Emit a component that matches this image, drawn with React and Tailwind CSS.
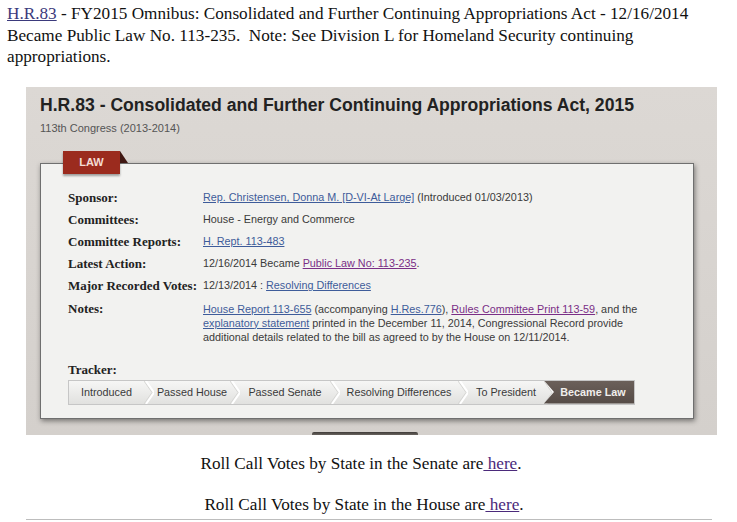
import React from 'react';

const serif = "font-['Liberation_Serif','Times_New_Roman',serif]";
const sans = "font-['Liberation_Sans',Arial,sans-serif]";

const rows = [
  {
    label: 'Sponsor:',
    value: (
      <>
        <a className="text-[#3e5c9a] underline">Rep. Christensen, Donna M. [D-VI-At Large]</a> (Introduced 01/03/2013)
      </>
    ),
  },
  { label: 'Committees:', value: 'House - Energy and Commerce' },
  { label: 'Committee Reports:', value: <a className="text-[#3e5c9a] underline">H. Rept. 113-483</a> },
  {
    label: 'Latest Action:',
    value: (
      <>
        12/16/2014 Became <a className="text-[#7a2e86] underline">Public Law No: 113-235</a>.
      </>
    ),
  },
  {
    label: 'Major Recorded Votes:',
    value: (
      <>
        12/13/2014 : <a className="text-[#3e5c9a] underline">Resolving Differences</a>
      </>
    ),
  },
];

// stages of the bill tracker, widths measured from the picture
const stages = [
  { name: 'Introduced', w: 'w-[75px]' },
  { name: 'Passed House', w: 'w-[76px]' },
  { name: 'Passed Senate', w: 'w-[90px]' },
  { name: 'Resolving Differences', w: 'w-[118px]' },
  { name: 'To President', w: 'w-[76px]' },
];

const Chevron = () => (
  <svg width="10" height="23" viewBox="0 0 10 23" className="shrink-0">
    <polyline points="0,0 8,11.5 0,23" fill="none" stroke="#d6d6d4" strokeWidth="1" />
    <polyline points="2,0 10,11.5 2,23" fill="none" stroke="#ffffff" strokeWidth="2" />
  </svg>
);

const Tracker = () => (
  <div className={`${sans} flex h-[25px] w-[567px] border border-[#c6c6c6] bg-gradient-to-b from-[#f6f6f5] to-[#e1e1df] text-[10.8px] text-[#3a3a3a]`}>
    {stages.map(s => (
      <React.Fragment key={s.name}>
        <div className={`${s.w} flex shrink-0 items-center justify-center`}>{s.name}</div>
        <Chevron />
      </React.Fragment>
    ))}
    <div className="-ml-[10px] flex flex-1 items-center justify-center bg-gradient-to-b from-[#6b605a] to-[#554b46] pl-[8px] font-bold text-[#f0eeec] [clip-path:polygon(0_0,100%_0,100%_100%,0_100%,10px_50%)]">
      Became Law
    </div>
  </div>
);

const App = () => {
  return (
    <div className="relative h-[522px] w-[737px] overflow-hidden bg-white">
      <p className={`${serif} pl-[7px] pt-[3px] text-[17.2px] leading-[21.5px] text-[#111]`}>
        <a className="text-[#3b3a7c] underline">H.R.83</a> - FY2015 Omnibus: Consolidated and Further Continuing Appropriations Act - 12/16/2014
        <br />
        Became Public Law No. 113-235.&nbsp; Note: See Division L for Homeland Security continuing
        <br />
        appropriations.
      </p>

      {/* screenshot of the congress.gov bill page */}
      <div className="ml-[26px] mt-[19px] flex h-[348px] w-[691px] flex-col bg-gradient-to-b from-[#dcd8d4] to-[#d4d0cc] px-[14px] pt-[8px]">
        <h1 className={`${sans} text-[17.6px] font-bold leading-[20px] text-[#222]`}>
          H.R.83 - Consolidated and Further Continuing Appropriations Act, 2015
        </h1>
        <div className={`${sans} mt-[6px] text-[11px] leading-[14px] text-[#555]`}>113th Congress (2013-2014)</div>

        <div className="relative z-10 ml-[23px] mt-[16px] flex">
          <div className={`${sans} flex h-[23px] w-[57px] items-center justify-center bg-[#9b2b1e] text-[11px] font-bold text-[#f4dcd4] shadow-[0_2px_2px_rgba(0,0,0,0.35)]`}>
            LAW
          </div>
          <svg width="8" height="12" viewBox="0 0 8 12">
            <polygon points="0,0 8,12 0,12" fill="#3f1712" />
          </svg>
        </div>

        <div className="-mt-[11px] h-[256px] w-[654px] border border-[#6f6f6f] bg-[#f2f2f0] pl-[27px] pt-[23px] shadow-[1px_2px_5px_rgba(0,0,0,0.45)]">
          {rows.map(r => (
            <div key={r.label} className="flex h-[22px] items-center">
              <div className={`${serif} w-[135px] shrink-0 text-[13px] font-bold text-[#222]`}>{r.label}</div>
              <div className={`${sans} text-[10.8px] text-[#3a3a3a]`}>{r.value}</div>
            </div>
          ))}
          <div className="mt-[1px] flex items-start">
            <div className={`${serif} w-[135px] shrink-0 text-[13px] font-bold leading-[22px] text-[#222]`}>Notes:</div>
            <div className={`${sans} w-[450px] pt-[4px] text-[10.8px] leading-[14px] text-[#3a3a3a]`}>
              <a className="text-[#3e5c9a] underline">House Report 113-655</a> (accompanying{' '}
              <a className="text-[#3e5c9a] underline">H.Res.776</a>),{' '}
              <a className="text-[#7a2e86] underline">Rules Committee Print 113-59</a>, and the{' '}
              <a className="text-[#3e5c9a] underline">explanatory statement</a> printed in the December 11, 2014, Congressional Record provide additional details related to the bill as agreed to by the House on 12/11/2014.
            </div>
          </div>
          <div className={`${serif} mt-[18px] text-[13px] font-bold leading-[16px] text-[#222]`}>Tracker:</div>
          <div className="mt-[2px]">
            <Tracker />
          </div>
        </div>

        <div className="ml-[272px] mt-auto h-[3px] w-[106px] rounded-t-[2px] bg-gradient-to-b from-[#3f3b38] to-[#6a6560]" />
      </div>

      <div className={`${serif} w-[722px] text-center text-[17.2px] leading-[21.5px] text-[#111]`}>
        <p className="mt-[18px]">
          Roll Call Votes by State in the Senate are<a className="text-[#4b2a7b] underline"> here</a>.
        </p>
        <p className="mt-[19.5px] pl-[6px]">
          Roll Call Votes by State in the House are<a className="text-[#4b2a7b] underline"> here</a>.
        </p>
      </div>
      <div className="ml-[26px] mt-[4px] h-px w-[686px] bg-[#bdbdbd]" />
    </div>
  );
};

export default App;
